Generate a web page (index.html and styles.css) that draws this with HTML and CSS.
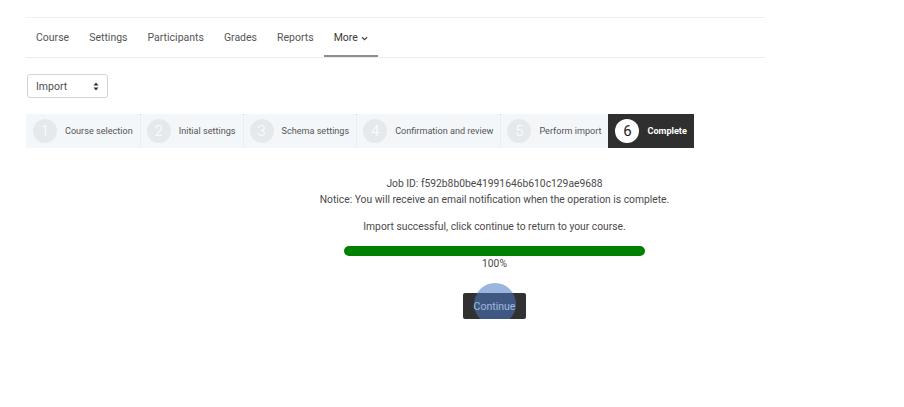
FILE: index.html
```html
<!DOCTYPE html>
<html>
<head>
<meta charset="utf-8">
<link rel="stylesheet" href="styles.css">
</head>
<body>
<div class="page">
  <nav class="secnav">
    <a class="navitem">Course</a>
    <a class="navitem">Settings</a>
    <a class="navitem">Participants</a>
    <a class="navitem">Grades</a>
    <a class="navitem">Reports</a>
    <a class="navitem active">More <svg class="caret" width="7" height="5" viewBox="0 0 7 5"><path d="M1 1.2 L3.5 3.6 L6 1.2" fill="none" stroke="#444" stroke-width="1.2"/></svg></a>
  </nav>

  <div class="selectbox">
    <span>Import</span>
    <svg class="updown" width="6" height="9" viewBox="0 0 6 9"><path d="M3 0.5 L5.5 3.5 H0.5 Z M3 8.5 L5.5 5.5 H0.5 Z" fill="#333"/></svg>
  </div>

  <div class="steps">
    <div class="step"><span class="num">1</span><span class="label">Course selection</span></div>
    <div class="step"><span class="num">2</span><span class="label">Initial settings</span></div>
    <div class="step"><span class="num">3</span><span class="label">Schema settings</span></div>
    <div class="step"><span class="num">4</span><span class="label">Confirmation and review</span></div>
    <div class="step"><span class="num">5</span><span class="label">Perform import</span></div>
    <div class="step current"><span class="num">6</span><span class="label">Complete</span></div>
  </div>

  <div class="result">
    <p class="info">Job ID: f592b8b0be41991646b610c129ae9688<br>Notice: You will receive an email notification when the operation is complete.</p>
    <p class="success">Import successful, click continue to return to your course.</p>
    <div class="progress"><div class="bar" style="width:100%"></div></div>
    <div class="pct">100%</div>
    <div class="btnwrap">
      <button class="continue">Continue</button>
      <span class="ripple"></span>
    </div>
  </div>
</div>
</body>
</html>
```

FILE: styles.css
```css
html, body {
  margin: 0;
  padding: 0;
  background: #ffffff;
}
body {
  font-family: Roboto, "Liberation Sans", Arial, sans-serif;
  font-size: 10.5px;
  color: #4a4a4a;
}
.page {
  padding: 17px 0 0 26px;
}
.secnav {
  width: 739px;
  height: 39px;
  border-top: 1px solid #eaf0f6;
  border-bottom: 1px solid #ececec;
  display: flex;
  align-items: stretch;
}
.navitem {
  display: flex;
  align-items: center;
  padding: 0 10px;
  color: #555;
  line-height: 16px;
  position: relative;
}
.navitem.active {
  color: #3a3a3a;
  gap: 3px;
}
.navitem.active::after {
  content: "";
  position: absolute;
  left: 0;
  right: 0;
  bottom: 0;
  height: 2px;
  background: #8e8e8e;
}
.caret {
  margin-top: 1px;
}
.selectbox {
  margin-top: 16px;
  margin-left: 1px;
  height: 22px;
  width: 63px;
  border: 1px solid #cfd4d9;
  border-radius: 3px;
  display: flex;
  align-items: center;
  justify-content: space-between;
  padding: 0 8px;
  color: #4f4f4f;
}
.steps {
  margin-top: 16px;
  display: flex;
  height: 34px;
}
.step {
  display: flex;
  align-items: center;
  gap: 8px;
  padding: 0 7px;
  background: #f4f7fa;
  font-size: 9.1px;
  color: #555;
  position: relative;
}
.step + .step::before {
  content: "";
  position: absolute;
  left: 0;
  top: 0;
  bottom: 0;
  border-left: 1px dotted #e1e5e9;
}
.num {
  width: 24px;
  height: 24px;
  border-radius: 50%;
  background: #e6e9ec;
  color: #ffffff;
  font-size: 15px;
  font-weight: 300;
  display: flex;
  align-items: center;
  justify-content: center;
}
.step.current {
  background: #2f2f2f;
  color: #ffffff;
  font-weight: 700;
}
.step.current::before {
  display: none;
}
.step.current .num {
  background: #ffffff;
  color: #222;
  font-weight: 400;
}
.result {
  width: 601px;
  margin-left: 168px;
  text-align: center;
  margin-top: 28px;
  line-height: 16px;
  font-size: 10.3px;
}
.result p {
  margin: 0;
}
.success {
  margin-top: 11px !important;
}
.progress {
  width: 301px;
  height: 10px;
  margin: 11px auto 0;
  border-radius: 5px;
  background: #e9ecef;
  overflow: hidden;
}
.bar {
  height: 100%;
  background: #008000;
}
.pct {
  line-height: 16px;
}
.btnwrap {
  position: relative;
  display: inline-block;
  margin-top: 21px;
}
.continue {
  display: block;
  width: 63px;
  height: 26px;
  background: #313131;
  color: #fff;
  border: none;
  border-radius: 2px;
  font-family: Roboto, "Liberation Sans", Arial, sans-serif;
  font-size: 10.5px;
  padding: 0;
}
.ripple {
  position: absolute;
  left: 11px;
  top: -10px;
  width: 42px;
  height: 42px;
  border-radius: 50%;
  background: rgba(74, 120, 196, 0.55);
}
```
